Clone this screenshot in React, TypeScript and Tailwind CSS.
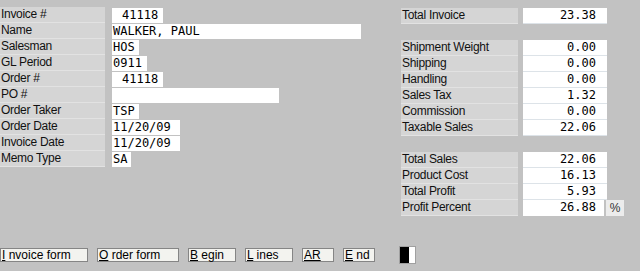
const leftRows = [
  { label: "Invoice #", value: "41118", w: "w-[51px]", pad: "pl-[10px]" },
  { label: "Name", value: "WALKER, PAUL", w: "w-[249px]", pad: "pl-[1px]" },
  { label: "Salesman", value: "HOS", w: "w-[27px]", pad: "pl-[1px]" },
  { label: "GL Period", value: "0911", w: "w-[35px]", pad: "pl-[1px]" },
  { label: "Order #", value: "41118", w: "w-[51px]", pad: "pl-[10px]" },
  { label: "PO #", value: "", w: "w-[167px]", pad: "pl-[1px]" },
  { label: "Order Taker", value: "TSP", w: "w-[27px]", pad: "pl-[1px]" },
  { label: "Order Date", value: "11/20/09", w: "w-[68px]", pad: "pl-[1px]" },
  { label: "Invoice Date", value: "11/20/09", w: "w-[68px]", pad: "pl-[1px]" },
  { label: "Memo Type", value: "SA", w: "w-[19px]", pad: "pl-[1px]" },
];

const charges = [
  ["Shipment Weight", "0.00"],
  ["Shipping", "0.00"],
  ["Handling", "0.00"],
  ["Sales Tax", "1.32"],
  ["Commission", "0.00"],
  ["Taxable Sales", "22.06"],
];

const totals = [
  ["Total Sales", "22.06"],
  ["Product Cost", "16.13"],
  ["Total Profit", "5.93"],
];

const buttons = [
  { key: "I", rest: " nvoice form", w: "w-[88px]" },
  { key: "O", rest: " rder form", w: "w-[82px]" },
  { key: "B", rest: " egin", w: "w-[48px]" },
  { key: "L", rest: " ines", w: "w-[48px]" },
  { key: "AR", rest: "", w: "w-[32px]" },
  { key: "E", rest: " nd", w: "w-[32px]" },
];

const labelCls =
  "h-[16px] bg-[#d5d5d5] border-b border-[#e2e2e2] pl-[1px] text-[12px] leading-[15px] tracking-[-0.3px] text-[#111] font-['Liberation_Sans',Arial,sans-serif]";
const monoCls = "font-['DejaVu_Sans_Mono',monospace] text-[12px] leading-[15px] text-black";

function RightRow({ label, value }: { label: string; value: string }) {
  return (
    <div className="flex gap-[5px] h-[16px]">
      <div className={`${labelCls} w-[117px]`}>{label}</div>
      <div className={`${monoCls} w-[84px] h-[16px] bg-white border-b border-[#dde3e8] text-right pr-[11px]`}>
        {value}
      </div>
    </div>
  );
}

export default function App() {
  return (
    <div className="w-[640px] h-[271px] bg-[#c2c2c2] flex flex-col overflow-hidden">
      <div className="flex">
        {/* left: invoice header */}
        <div className="w-[401px] pt-[7px] flex flex-col">
          {leftRows.map((r) => (
            <div key={r.label} className="flex gap-[7px] h-[16px]">
              <div className={`${labelCls} w-[105px]`}>{r.label}</div>
              <div className={`${monoCls} ${r.w} ${r.pad} h-[15px] mt-[1px] bg-white whitespace-pre`}>
                {r.value}
              </div>
            </div>
          ))}
        </div>

        {/* right: totals */}
        <div className="pt-[8px] flex flex-col">
          <RightRow label="Total Invoice" value="23.38" />
          <div className="h-[16px]" />
          {charges.map(([l, v]) => (
            <RightRow key={l} label={l} value={v} />
          ))}
          <div className="h-[16px]" />
          {totals.map(([l, v]) => (
            <RightRow key={l} label={l} value={v} />
          ))}
          <div className="flex h-[16px]">
            <div className={`${labelCls} w-[117px]`}>Profit Percent</div>
            <div className={`${monoCls} ml-[5px] w-[81px] h-[16px] bg-white text-right pr-[8px]`}>26.88</div>
            <div className="ml-[2px] w-[18px] h-[16px] bg-[#ececec] text-[12px] leading-[16px] text-center text-[#333] font-['Liberation_Sans',Arial,sans-serif]">
              %
            </div>
          </div>
        </div>
      </div>

      {/* command buttons */}
      <div className="mt-[30px] flex items-center gap-[9px]">
        {buttons.map((b) => (
          <button
            key={b.key}
            className={`${b.w} h-[14px] bg-[#f3f3ef] border border-[#858585] text-left pl-[1px] text-[12px] leading-[12px] text-black whitespace-pre font-['Liberation_Sans',Arial,sans-serif]`}
          >
            <span className="underline">{b.key}</span>
            {b.rest}
          </button>
        ))}
        <div className="ml-[15px] flex h-[18px] w-[17px] border border-[#a0a0a0]">
          <div className="w-[9px] bg-black" />
          <div className="flex-1 bg-white" />
        </div>
      </div>
    </div>
  );
}
